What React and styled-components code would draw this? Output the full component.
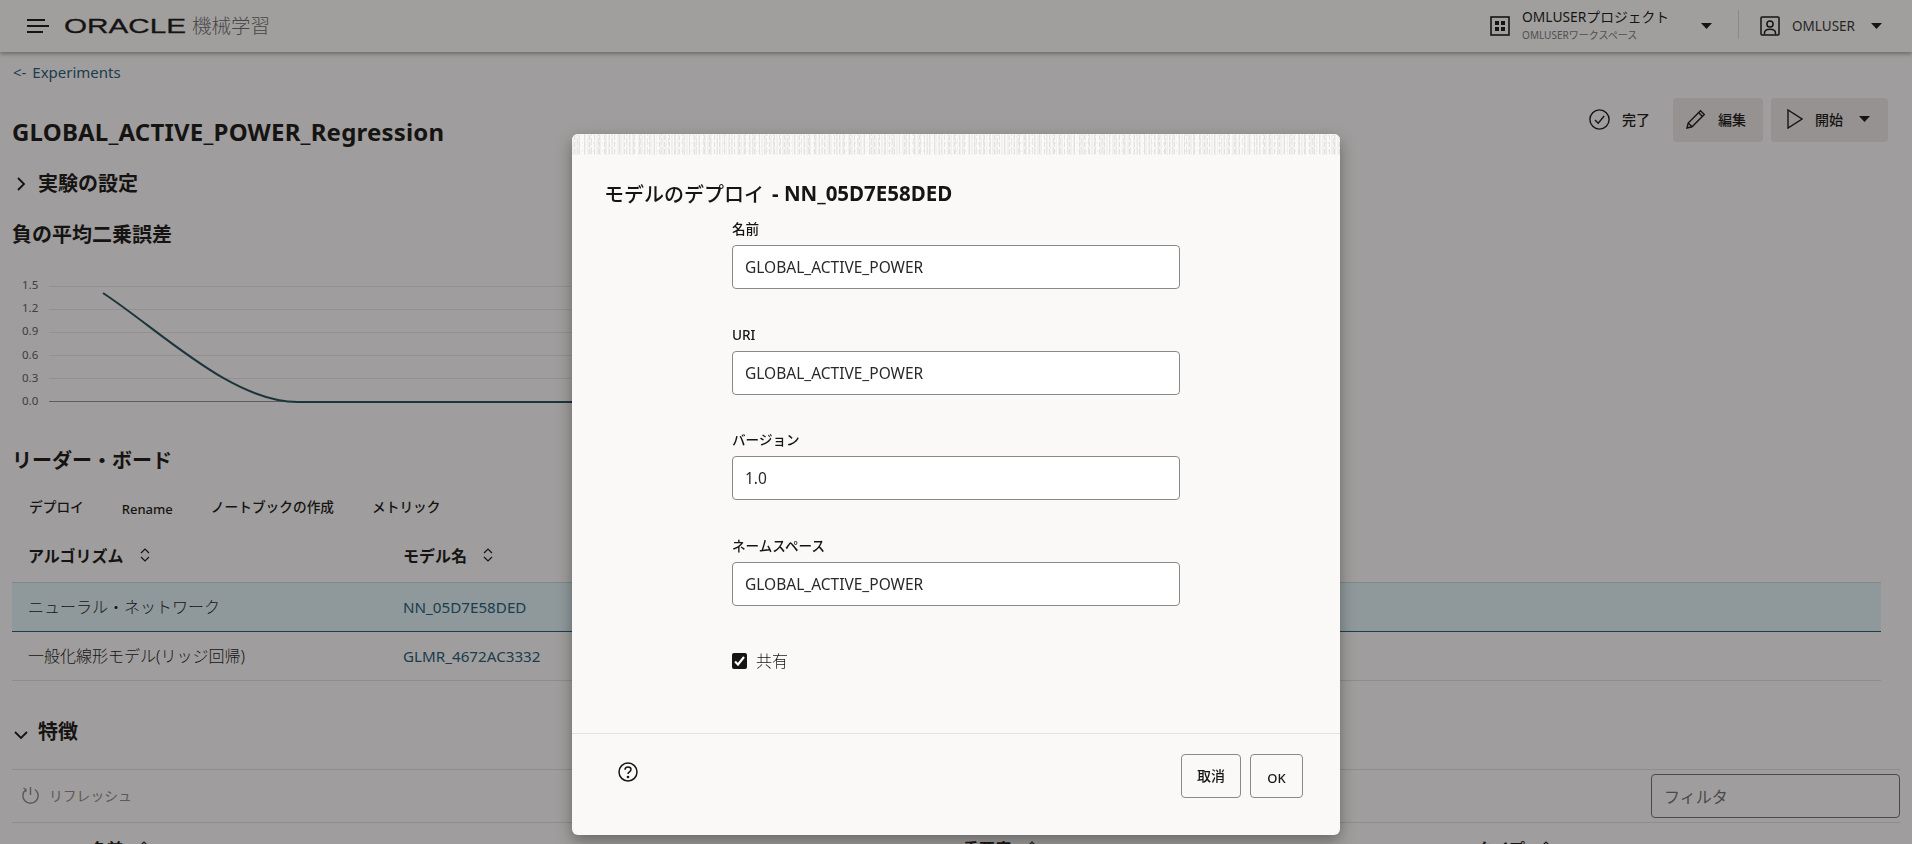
import React from 'react';
import styled, { createGlobalStyle } from 'styled-components';

const ink = '#161513';
const teal = '#1c5a72';
const hairline = 'rgba(22, 21, 19, 0.12)';

const GlobalStyle = createGlobalStyle`
  html, body {
    margin: 0;
    height: 100%;
    overflow: hidden;
  }
  body {
    background: #fbf9f8;
    color: ${ink};
    font-family: "Noto Sans", "Noto Sans CJK JP", sans-serif;
  }
  * {
    box-sizing: border-box;
  }
`;

const Page = styled.div`
  height: 844px;
  overflow: hidden;
`;

/* top bar */
const TopBar = styled.header`
  height: 52px;
  display: flex;
  align-items: center;
  padding: 0 30px 0 27px;
  background: #fcfcfb;
  box-shadow: 0 2px 4px rgba(0, 0, 0, 0.35);
`;

const Burger = styled.div`
  width: 22px;
  height: 14px;
  margin-right: 14px;
  display: flex;
  flex-direction: column;
  justify-content: space-between;
`;

const BurgerLine = styled.span`
  display: block;
  height: 2px;
  width: ${props => props.$w}px;
  background: ${ink};
`;

const Product = styled.span`
  margin-left: 5px;
  font-size: 19.5px;
  line-height: 26px;
  color: #6b6967;
  font-weight: 300;
`;

const Spacer = styled.div`
  flex: 1;
`;

const ProjectBlock = styled.div`
  width: 152px;
  margin-left: 12px;
  display: flex;
  flex-direction: column;
`;

const ProjectName = styled.span`
  font-size: 13.8px;
  line-height: 19px;
  margin-top: -3px;
  white-space: nowrap;
`;

const ProjectSub = styled.span`
  margin-top: 2px;
  font-size: 10px;
  line-height: 14px;
  color: #77757a;
  white-space: nowrap;
`;

const Divider = styled.div`
  width: 1px;
  height: 29px;
  margin: -4px 21px 0 26px;
  background: rgba(22, 21, 19, 0.15);
`;

const UserName = styled.span`
  margin: 0 16px 0 12px;
  font-size: 13.5px;
  color: #33312f;
`;

/* page content */
const Content = styled.main`
  padding: 0 12px;
`;

const Crumb = styled.a`
  height: 40px;
  display: flex;
  align-items: center;
  padding-left: 1px;
  font-size: 15px;
  word-spacing: 2px;
  color: ${teal};
`;

const TitleRow = styled.div`
  height: 79px;
  display: flex;
  justify-content: space-between;
  align-items: flex-start;
`;

const PageTitle = styled.h1`
  margin: 25px 0 0;
  font-size: 24px;
  line-height: 30px;
  font-weight: 700;
  letter-spacing: 0.2px;
`;

const Actions = styled.div`
  margin: 6px 12px 0 0;
  display: flex;
  gap: 8px;
`;

const ActionButton = styled.div`
  height: 44px;
  display: flex;
  align-items: center;
  gap: 12px;
  padding: ${props => props.$padding};
  border-radius: 4px;
  font-size: 14px;
  font-weight: 500;
  background: ${props => (props.$plain ? 'transparent' : 'rgba(22, 21, 19, 0.08)')};
`;

const Heading = styled.h2`
  margin: ${props => props.$margin || 0};
  height: 26px;
  display: flex;
  align-items: center;
  gap: ${props => props.$gap || 0}px;
  padding-left: ${props => props.$pad || 0}px;
  font-size: 20px;
  line-height: 26px;
  font-weight: 700;
`;

const ChartSvg = styled.svg`
  display: block;
  margin-top: 22px;
`;

const ChartLabel = styled.text`
  font-family: "Noto Sans", sans-serif;
  font-size: 11.5px;
  fill: #5c5a58;
`;

const TableBar = styled.div`
  height: 40px;
  margin-top: 13px;
  padding-left: 17px;
  display: flex;
  align-items: center;
  gap: 38px;
`;

const BarItem = styled.span`
  font-size: ${props => (props.$latin ? '13px' : '13.7px')};
  margin: ${props => (props.$latin ? '4px 0 0' : '0 0 2px')};
  font-weight: 500;
  white-space: nowrap;
`;

const Grid = styled.div`
  display: grid;
  grid-template-columns: ${props => props.$columns};
  align-items: center;
  width: ${props => props.$width || '100%'};
`;

const HeadCell = styled.div`
  display: flex;
  align-items: center;
  gap: 16px;
  padding-left: ${props => props.$pad || 0}px;
  font-size: 16px;
  font-weight: 700;
  white-space: nowrap;
`;

const HeadRow = styled(Grid)`
  height: ${props => props.$height}px;
`;

const Row = styled(Grid)`
  height: ${props => props.$height}px;
  border-bottom: 1px solid ${props => (props.$selected ? teal : hairline)};
  border-top: ${props => (props.$selected ? `1px solid ${hairline}` : '0')};
  background: ${props => (props.$selected ? '#e0f1f6' : 'transparent')};
`;

const Cell = styled.div`
  padding-left: 16px;
  font-size: 16px;
  font-weight: 300;
  margin-top: -3px;
  white-space: nowrap;
`;

const LinkCell = styled.a`
  font-size: 15.2px;
  color: ${teal};
`;

const RefreshBar = styled.div`
  height: 54px;
  margin-top: 24px;
  padding: 4px 0 4px 10px;
  display: flex;
  align-items: center;
  justify-content: space-between;
  border-top: 1px solid ${hairline};
  border-bottom: 1px solid ${hairline};
`;

const RefreshLabel = styled.span`
  display: flex;
  align-items: center;
  gap: 10px;
  font-size: 13.8px;
  color: #8a8886;
  margin-top: -2px;
`;

const FilterBox = styled.div`
  width: 249px;
  height: 44px;
  display: flex;
  align-items: center;
  padding-left: 12px;
  border: 1px solid #6f6e6c;
  border-radius: 4px;
  font-size: 16px;
  color: #6f6e6c;
`;

/* dialog */
const Backdrop = styled.div`
  position: fixed;
  inset: 0;
  display: flex;
  justify-content: center;
  align-items: flex-start;
  padding-top: 134px;
  background: rgba(22, 21, 19, 0.4);
`;

const Dialog = styled.section`
  width: 768px;
  height: 701px;
  display: flex;
  flex-direction: column;
  border-radius: 6px;
  overflow: hidden;
  background: #fbf9f8;
  box-shadow: 0 6px 16px rgba(0, 0, 0, 0.35);
`;

const DialogTexture = styled.div`
  height: 21px;
  flex: none;
  background-color: #f2f0ee;
  background-image:
    radial-gradient(ellipse 1px 3px, #e3e1df 95%, transparent),
    radial-gradient(ellipse 1px 4px, #e8e6e4 95%, transparent),
    radial-gradient(ellipse 1px 3px, #fbf9f8 95%, transparent),
    radial-gradient(ellipse 2px 4px, #fbf9f8 95%, transparent);
  background-size: 5px 7px, 7px 9px, 3px 5px, 11px 8px;
  background-position: 0 0, 2px 3px, 1px 2px, 4px 1px;
`;

const DialogTitle = styled.h2`
  margin: 18px 0 6px 32px;
  height: 40px;
  display: flex;
  align-items: center;
  gap: 8px;
  font-size: 20.5px;
  font-weight: 700;
`;

const TitleKana = styled.span`
  font-size: 20px;
  font-weight: 500;
`;

const Form = styled.div`
  flex: 1;
  margin-left: 160px;
  width: 448px;
`;

const Field = styled.div`
  height: 105.6px;
`;

const FieldLabel = styled.label`
  display: block;
  height: 20px;
  margin-bottom: 6px;
  font-size: 13.6px;
  line-height: 20px;
  font-weight: 500;
`;

const Input = styled.div`
  height: 44px;
  display: flex;
  align-items: center;
  padding-left: 12px;
  border: 1px solid #8b8987;
  border-radius: 4px;
  background: #fff;
  font-size: 15.5px;
  color: #2a2927;
`;

const CheckRow = styled.div`
  margin-top: 10px;
  display: flex;
  align-items: center;
  gap: 9px;
  font-size: 16px;
  line-height: 20px;
  font-weight: 300;
`;

const CheckBox = styled.span`
  width: 15px;
  height: 16px;
  display: flex;
  align-items: center;
  justify-content: center;
  border-radius: 2px;
  background: ${ink};
`;

const DialogFooter = styled.footer`
  height: 102px;
  flex: none;
  display: flex;
  justify-content: space-between;
  align-items: flex-start;
  padding: 20px 37px 0 46px;
  border-top: 1px solid #e4e2e0;
`;

const HelpWrap = styled.div`
  margin-top: 8px;
`;

const FooterButtons = styled.div`
  display: flex;
  gap: 9px;
`;

const DialogButton = styled.div`
  width: ${props => props.$w}px;
  height: 44px;
  display: flex;
  align-items: center;
  justify-content: center;
  padding-top: ${props => (props.$low ? '3px' : '0')};
  padding-bottom: ${props => (props.$low ? '0' : '2px')};
  border: 1px solid #8b8987;
  border-radius: 4px;
  font-size: ${props => (props.$low ? '13px' : '14px')};
  font-weight: 500;
`;

const HeadingIcon = styled.span`
  display: flex;
  margin-top: ${props => props.$top || 0}px;
`;

/* drawn icons */
function Caret({ margin }) {
  return (
    <svg width="11" height="6" viewBox="0 0 11 6" style={margin ? { margin } : undefined}>
      <path d="M0 0h11L5.5 6z" fill={ink} />
    </svg>
  );
}

function GridIcon() {
  return (
    <svg width="20" height="20" viewBox="0 0 20 20" fill="none">
      <rect x="1" y="1" width="18" height="18" stroke={ink} strokeWidth="1.6" />
      <path d="M5 5h4v4H5zM11 5h4v4h-4zM5 11h4v4H5zM11 11h4v4h-4z" fill={ink} />
    </svg>
  );
}

function UserIcon() {
  return (
    <svg width="20" height="20" viewBox="0 0 20 20" fill="none" stroke={ink} strokeWidth="1.5">
      <rect x="1" y="1" width="18" height="18" rx="1" />
      <circle cx="10" cy="8" r="3.1" />
      <path d="M4.5 18.5v-1.5c0-2.4 2-3.8 5.500-3.800s5.500 1.400 5.500 3.800v1.500" />
    </svg>
  );
}

function CheckCircle() {
  return (
    <svg width="21" height="21" viewBox="0 0 21 21" fill="none" stroke={ink} strokeWidth="1.4">
      <circle cx="10.500" cy="10.500" r="9.600" />
      <path d="M6 11l3.200 3.200L15.200 7" />
    </svg>
  );
}

function PencilIcon() {
  return (
    <svg width="20" height="20" viewBox="0 0 20 20" fill="none" stroke={ink} strokeWidth="1.4">
      <path d="M1 19l1.200-5L14.500 1.700 18.300 5.500 6 17.800z" />
      <path d="M2.200 14L6 17.800M12.600 3.600l3.800 3.800" />
    </svg>
  );
}

function PlayIcon() {
  return (
    <svg width="16" height="20" viewBox="0 0 16 20" fill="none" stroke={ink} strokeWidth="1.4">
      <path d="M1 1v18l14-9z" />
    </svg>
  );
}

function ChevronRight() {
  return (
    <svg width="9" height="14" viewBox="0 0 9 14" fill="none" stroke={ink} strokeWidth="1.8">
      <path d="M1 1l6 6-6 6" />
    </svg>
  );
}

function ChevronDown() {
  return (
    <svg width="14" height="9" viewBox="0 0 14 9" fill="none" stroke={ink} strokeWidth="1.8">
      <path d="M1 1l6 6 6-6" />
    </svg>
  );
}

function SortIcon() {
  return (
    <svg width="10" height="14" viewBox="0 0 10 14" fill="none" stroke={ink} strokeWidth="1.2">
      <path d="M1 5l4-4 4 4M1 9l4 4 4-4" />
    </svg>
  );
}

function RefreshIcon() {
  return (
    <svg width="17" height="18" viewBox="0 0 17 18" fill="none" stroke="#8a8886" strokeWidth="1.4">
      <path d="M4 3.500a7.600 7.600 0 1 0 9 0M8.500 1v8M1.500 2l2.500 1.500L3.500 6" />
    </svg>
  );
}

function HelpIcon() {
  return (
    <svg width="20" height="20" viewBox="0 0 20 20" fill="none" stroke={ink} strokeWidth="1.5">
      <circle cx="10" cy="10" r="9" />
      <path d="M7 7.800c0-1.800 1.300-2.800 3-2.800s3 1 3 2.500c0 2.300-3 2.300-3 4.500" />
      <circle cx="10" cy="15" r="0.6" fill={ink} />
    </svg>
  );
}

function CheckMark() {
  return (
    <svg width="11" height="10" viewBox="0 0 11 10" fill="none" stroke="#fff" strokeWidth="2.2">
      <path d="M1 5.500l3 3L10 1" />
    </svg>
  );
}

function OracleLogo() {
  // real text, stretched out to the wordmark's width
  return (
    <svg width="124" height="26" viewBox="0 0 124 26">
      <text
        x="1"
        y="20"
        textLength="122"
        lengthAdjust="spacingAndGlyphs"
        fontFamily="Liberation Sans, sans-serif"
        fontSize="21"
        fill={ink}
        stroke={ink}
        strokeWidth="0.3"
      >
        ORACLE
      </text>
    </svg>
  );
}

const gridYs = [16.5, 39.5, 62.5, 85.5, 108.5];
const axisLabels = ['1.5', '1.2', '0.9', '0.6', '0.3', '0.0'];

function LossChart() {
  return (
    <ChartSvg width="1280" height="150" viewBox="0 0 1280 150" fill="none">
      {gridYs.map(y => (
        <line key={y} x1="37" x2="1280" y1={y} y2={y} stroke="rgba(22,21,19,0.09)" />
      ))}
      <line x1="37" x2="1280" y1="131.500" y2="131.500" stroke="#8f8e8c" />
      {axisLabels.map((label, i) => (
        <ChartLabel key={label} x="10" y={19 + i * 23.2}>{label}</ChartLabel>
      ))}
      <path d="M91 23C150 62 220 132 286 132H1280" stroke="#1f4d55" strokeWidth="2" />
    </ChartSvg>
  );
}

const fields = [
  { label: '名前', value: 'GLOBAL_ACTIVE_POWER' },
  { label: 'URI', value: 'GLOBAL_ACTIVE_POWER' },
  { label: 'バージョン', value: '1.0' },
  { label: 'ネームスペース', value: 'GLOBAL_ACTIVE_POWER' },
];

const tableColumns = '391px 1fr';
const featureColumns = '951px 514px 1fr';

export default function App() {
  return (
    <Page>
      <GlobalStyle />
      <TopBar>
        <Burger>
          <BurgerLine $w={18} />
          <BurgerLine $w={22} />
          <BurgerLine $w={16} />
        </Burger>
        <OracleLogo />
        <Product>機械学習</Product>
        <Spacer />
        <GridIcon />
        <ProjectBlock>
          <ProjectName>OMLUSERプロジェクト</ProjectName>
          <ProjectSub>OMLUSERワークスペース</ProjectSub>
        </ProjectBlock>
        <Caret margin="0 0 0 27px" />
        <Divider />
        <UserIcon />
        <UserName>OMLUSER</UserName>
        <Caret />
      </TopBar>

      <Content>
        <Crumb>&lt;- Experiments</Crumb>
        <TitleRow>
          <PageTitle>GLOBAL_ACTIVE_POWER_Regression</PageTitle>
          <Actions>
            <ActionButton $plain $padding="0 15px 2px 0">
              <CheckCircle />
              完了
            </ActionButton>
            <ActionButton $padding="0 17px 2px 13px">
              <PencilIcon />
              編集
            </ActionButton>
            <ActionButton $padding="0 18px 2px 16px">
              <PlayIcon />
              開始
              <Caret margin="0 0 0 4px" />
            </ActionButton>
          </Actions>
        </TitleRow>

        <Heading $pad={5} $gap={12}>
          <HeadingIcon><ChevronRight /></HeadingIcon>
          実験の設定
        </Heading>
        <Heading $margin="25px 0 0">負の平均二乗誤差</Heading>
        <LossChart />

        <Heading $margin="28px 0 0">リーダー・ボード</Heading>
        <TableBar>
          <BarItem>デプロイ</BarItem>
          <BarItem $latin>Rename</BarItem>
          <BarItem>ノートブックの作成</BarItem>
          <BarItem>メトリック</BarItem>
        </TableBar>
        <HeadRow $columns={tableColumns} $width="1869px" $height={55}>
          <HeadCell $pad={16}>アルゴリズム<SortIcon /></HeadCell>
          <HeadCell>モデル名<SortIcon /></HeadCell>
        </HeadRow>
        <Row $columns={tableColumns} $width="1869px" $height={50} $selected>
          <Cell>ニューラル・ネットワーク</Cell>
          <LinkCell>NN_05D7E58DED</LinkCell>
        </Row>
        <Row $columns={tableColumns} $width="1869px" $height={49}>
          <Cell>一般化線形モデル(リッジ回帰)</Cell>
          <LinkCell>GLMR_4672AC3332</LinkCell>
        </Row>

        <Heading $margin="38px 0 0" $pad={2} $gap={10}>
          <HeadingIcon $top={6}><ChevronDown /></HeadingIcon>
          特徴
        </Heading>
        <RefreshBar>
          <RefreshLabel>
            <RefreshIcon />
            リフレッシュ
          </RefreshLabel>
          <FilterBox>フィルタ</FilterBox>
        </RefreshBar>
        <HeadRow $columns={featureColumns} $height={50}>
          <HeadCell $pad={79}>名前<SortIcon /></HeadCell>
          <HeadCell>重要度<SortIcon /></HeadCell>
          <HeadCell>タイプ<SortIcon /></HeadCell>
        </HeadRow>
      </Content>

      <Backdrop>
        <Dialog>
          <DialogTexture />
          <DialogTitle>
            <TitleKana>モデルのデプロイ</TitleKana>
            - NN_05D7E58DED
          </DialogTitle>
          <Form>
            {fields.map(field => (
              <Field key={field.label}>
                <FieldLabel>{field.label}</FieldLabel>
                <Input>{field.value}</Input>
              </Field>
            ))}
            <CheckRow>
              <CheckBox><CheckMark /></CheckBox>
              共有
            </CheckRow>
          </Form>
          <DialogFooter>
            <HelpWrap><HelpIcon /></HelpWrap>
            <FooterButtons>
              <DialogButton $w={60}>取消</DialogButton>
              <DialogButton $w={53} $low>OK</DialogButton>
            </FooterButtons>
          </DialogFooter>
        </Dialog>
      </Backdrop>
    </Page>
  );
}
